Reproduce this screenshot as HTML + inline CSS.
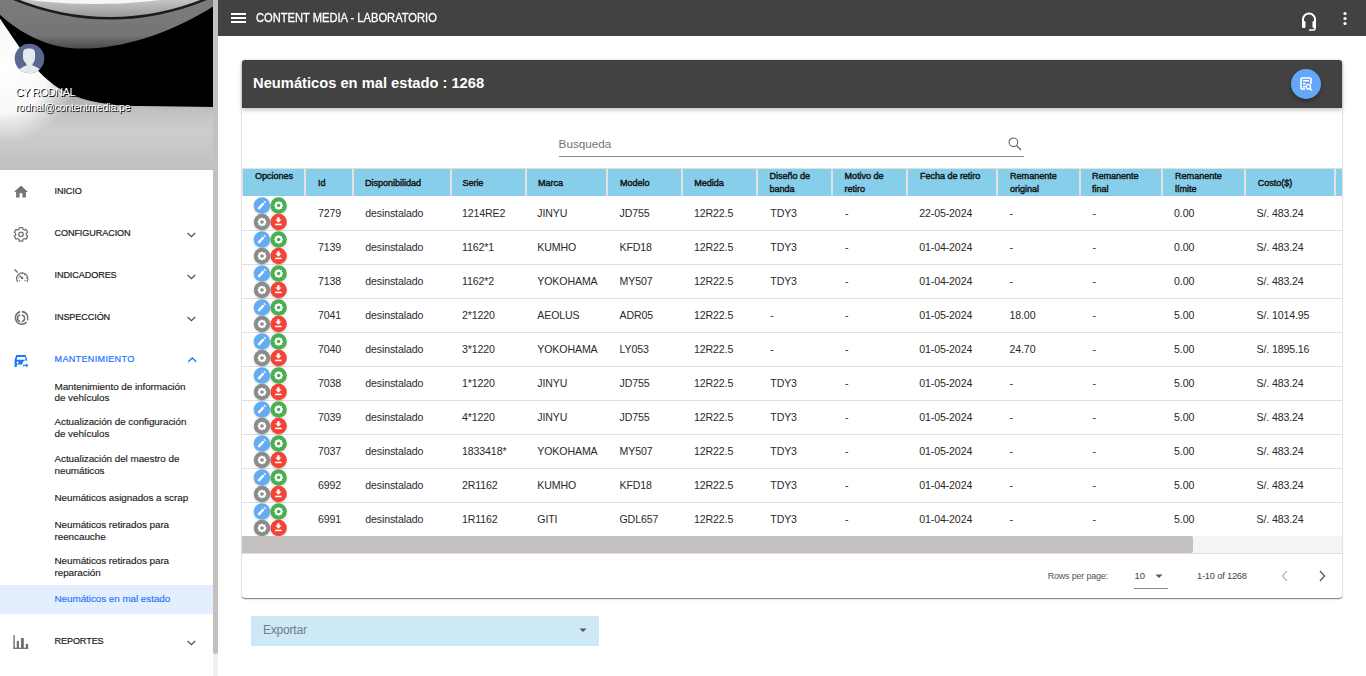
<!DOCTYPE html><html><head><meta charset="utf-8"><style>
*{margin:0;padding:0;box-sizing:border-box}
html,body{width:1366px;height:676px;overflow:hidden;background:#fff;font-family:"Liberation Sans", sans-serif}
.t{position:absolute;white-space:nowrap}
.a{position:absolute}
</style></head><body><div class="a" style="left:0;top:0;width:218px;height:676px"><svg class="a" style="left:0;top:0" width="213" height="170" viewBox="0 0 213 170">
<defs>
<linearGradient id="floor" gradientUnits="userSpaceOnUse" x1="0" y1="100" x2="0" y2="170"><stop offset="0" stop-color="#b4b4b4"/><stop offset="0.2" stop-color="#c4c4c4"/><stop offset="0.45" stop-color="#cdcdcd"/><stop offset="1" stop-color="#c0c0c0"/></linearGradient>
<radialGradient id="lw" gradientUnits="userSpaceOnUse" cx="5" cy="70" r="72"><stop offset="0" stop-color="#fff"/><stop offset="0.6" stop-color="#f8f8f8"/><stop offset="1" stop-color="#eee" stop-opacity="0"/></radialGradient>
<linearGradient id="rim" gradientUnits="userSpaceOnUse" x1="0" y1="0" x2="0" y2="17"><stop offset="0" stop-color="#c4c4c4"/><stop offset="1" stop-color="#9a9a9a"/></linearGradient>
<linearGradient id="sw" gradientUnits="userSpaceOnUse" x1="0" y1="15" x2="0" y2="49"><stop offset="0" stop-color="#7a7a7a"/><stop offset="0.6" stop-color="#747474"/><stop offset="1" stop-color="#4a4a4a"/></linearGradient>
<filter id="bl" x="-20%" y="-20%" width="140%" height="140%"><feGaussianBlur stdDeviation="0.6"/></filter>
</defs>
<rect width="213" height="170" fill="url(#floor)"/>
<rect x="0" y="0" width="213" height="170" fill="url(#lw)"/>
<g filter="url(#bl)">
<path d="M-5 -5 L220 -5 L220 107 L140 106 C105 106 80 100 62 90 C35 75 15 40 -5 11 Z" fill="#050505"/>
<path d="M-5 -5 L220 -5 L220 2 C170 35 120 49 80 48.6 C40 48 10 25 -5 10 Z" fill="url(#sw)"/>
<circle cx="110" cy="-232" r="251.5" fill="#1a1a1a"/>
<circle cx="110" cy="-232" r="249" fill="url(#rim)"/>
<circle cx="95" cy="-526" r="530" fill="#f6f6f6"/>
</g>
</svg><svg class="a" style="left:14px;top:43px" width="31" height="31" viewBox="0 0 31 31">
<defs><clipPath id="cc"><circle cx="15.5" cy="15.5" r="14.8"/></clipPath></defs>
<circle cx="15.5" cy="15.5" r="14.8" fill="#5a6890"/>
<g clip-path="url(#cc)" fill="#e4e9ec">
<path d="M9 10 C9 6.5 11 5.4 15 5.4 C19 5.4 21 6.5 21 10 L21 14.5 C21 17.5 20 19.5 18.5 21 L18.5 22.5 C21.5 23.5 24.5 25 27 27.5 L27 32 L4 32 L4 27.5 C6.5 25 9.5 23.5 12.5 22.5 L12.5 21 C11 19.5 9 17.5 9 14.5 Z"/>
</g></svg><div class="t" style="left:15.4px;top:86.92px;font-size:11.2px;line-height:11.2px;color:#fff;font-weight:400;letter-spacing:-0.6px;text-shadow:1px 1px 0 #000">CY RODNAL</div><div class="t" style="left:15.4px;top:101.93px;font-size:10.6px;line-height:10.6px;color:#fff;font-weight:400;letter-spacing:-0.16px;text-shadow:1px 1px 0 #000">rodnal@contentmedia.pe</div><div class="t" style="left:54.5px;top:187.30px;font-size:9.1px;line-height:9.1px;color:#1c1c1c;font-weight:400;letter-spacing:-0.1px;-webkit-text-stroke:0.2px #1c1c1c">INICIO</div><div class="t" style="left:54.5px;top:229.30px;font-size:9.1px;line-height:9.1px;color:#1c1c1c;font-weight:400;letter-spacing:-0.1px;-webkit-text-stroke:0.2px #1c1c1c">CONFIGURACION</div><svg class="a" style="left:185px;top:229.5px" width="13" height="9"><path d="M2.6 3 L6.4 6.7 L10.2 3" fill="none" stroke="#4a4a4a" stroke-width="1.1"/></svg><div class="t" style="left:54.5px;top:271.30px;font-size:9.1px;line-height:9.1px;color:#1c1c1c;font-weight:400;letter-spacing:-0.1px;-webkit-text-stroke:0.2px #1c1c1c">INDICADORES</div><svg class="a" style="left:185px;top:271.5px" width="13" height="9"><path d="M2.6 3 L6.4 6.7 L10.2 3" fill="none" stroke="#4a4a4a" stroke-width="1.1"/></svg><div class="t" style="left:54.5px;top:313.30px;font-size:9.1px;line-height:9.1px;color:#1c1c1c;font-weight:400;letter-spacing:-0.1px;-webkit-text-stroke:0.2px #1c1c1c">INSPECCIÓN</div><svg class="a" style="left:185px;top:313.5px" width="13" height="9"><path d="M2.6 3 L6.4 6.7 L10.2 3" fill="none" stroke="#4a4a4a" stroke-width="1.1"/></svg><div class="t" style="left:54.5px;top:355.30px;font-size:9.1px;line-height:9.1px;color:#1f74ff;font-weight:400;letter-spacing:0.3px;-webkit-text-stroke:0.2px #1f74ff">MANTENIMIENTO</div><svg class="a" style="left:185px;top:355.5px" width="13" height="9"><path d="M3.2 5.8 L7.3 2 L11.1 5.8" fill="none" stroke="#1f74ff" stroke-width="1.4"/></svg><div class="t" style="left:54.5px;top:637.30px;font-size:9.1px;line-height:9.1px;color:#1c1c1c;font-weight:400;letter-spacing:-0.1px;-webkit-text-stroke:0.2px #1c1c1c">REPORTES</div><svg class="a" style="left:185px;top:637.5px" width="13" height="9"><path d="M2.6 3 L6.4 6.7 L10.2 3" fill="none" stroke="#4a4a4a" stroke-width="1.1"/></svg><svg class="a" style="left:0;top:170px" width="40" height="490" viewBox="0 170 40 490"><path transform="translate(12.6,183.5) scale(0.7)" d="M10 20v-6h4v6h5v-8h3L12 3 2 12h3v8z" fill="#757575"/><path d="M19.02 229.28 L19.34 227.50 L22.66 227.50 L22.98 229.28 L24.36 230.07 L26.06 229.46 L27.72 232.34 L26.34 233.50 L26.34 235.10 L27.72 236.26 L26.06 239.14 L24.36 238.53 L22.98 239.32 L22.66 241.10 L19.34 241.10 L19.02 239.32 L17.64 238.53 L15.94 239.14 L14.28 236.26 L15.66 235.10 L15.66 233.50 L14.28 232.34 L15.94 229.46 L17.64 230.07 Z" fill="none" stroke="#6f6f6f" stroke-width="1.25" stroke-linejoin="round"/><circle cx="21" cy="234.3" r="2.3" fill="none" stroke="#6f6f6f" stroke-width="1.25"/><path d="M17.6 281.8 A5.6 5.6 0 1 1 26.8 281.8" fill="none" stroke="#6f6f6f" stroke-width="1.3"/><path d="M14.5 269.5 L17.6 272.6" stroke="#6f6f6f" stroke-width="1.4"/><path d="M19.3 275.6 L22.2 278" stroke="#6f6f6f" stroke-width="1.6"/><path d="M22.2 272.6 V274.2 M17.3 278 H18.8 M25.6 278 H27 M19 281 L19.9 280.2 M25.4 281 L24.6 280.2 M24.8 274.6 L24 275.4" stroke="#6f6f6f" stroke-width="1.1"/><circle cx="22.2" cy="278.1" r="1.2" fill="#6f6f6f"/><path d="M20.3 311.6 A6.4 6.4 0 1 0 26.6 322" fill="none" stroke="#6f6f6f" stroke-width="1.6"/><path d="M22 311.6 A6.4 6.4 0 0 1 27.4 320.5" fill="none" stroke="#6f6f6f" stroke-width="1.6"/><path d="M20.3 321.7 A3.4 3.4 0 0 1 20.3 315" fill="none" stroke="#6f6f6f" stroke-width="1.5"/><path d="M21.8 315 A3.4 3.4 0 0 1 21.8 321.7" fill="none" stroke="#6f6f6f" stroke-width="1.5"/><path d="M16.2 355 H25.6 L27.4 360.5 H24.5 C23.2 361 22.6 362.5 22.2 364.6 H16.8 V367 H14.6 V360 Z M17.4 357 L16.6 359.8 H25.8 L25 357 Z" fill="#1f74ff" fill-rule="evenodd"/><circle cx="17.6" cy="362.6" r="1.1" fill="#fff"/><path d="M23 365.4 H27" stroke="#1f74ff" stroke-width="1.3"/><path d="M26.2 363.3 L28.4 365.4 L26.2 367.5 Z" fill="#1f74ff"/><rect x="13.4" y="635.2" width="1.4" height="13.7" fill="#6f6f6f"/><rect x="16.8" y="640.9" width="2.2" height="8" fill="#6f6f6f"/><rect x="21" y="638" width="2.8" height="10.9" fill="#6f6f6f"/><rect x="25.8" y="644" width="2.3" height="4.9" fill="#6f6f6f"/><rect x="13.4" y="647.7" width="14.8" height="1.2" fill="#6f6f6f"/></svg><div class="a" style="left:0;top:585px;width:213px;height:29px;background:#e3effc"></div><div class="t" style="left:54.5px;top:381.52px;font-size:9.9px;line-height:9.9px;color:#1c1c1c;font-weight:400;letter-spacing:-0.05px;-webkit-text-stroke:0.15px #1c1c1c">Mantenimiento de información</div><div class="t" style="left:54.5px;top:393.32px;font-size:9.9px;line-height:9.9px;color:#1c1c1c;font-weight:400;letter-spacing:-0.05px;-webkit-text-stroke:0.15px #1c1c1c">de vehículos</div><div class="t" style="left:54.5px;top:417.42px;font-size:9.9px;line-height:9.9px;color:#1c1c1c;font-weight:400;letter-spacing:-0.05px;-webkit-text-stroke:0.15px #1c1c1c">Actualización de configuración</div><div class="t" style="left:54.5px;top:429.22px;font-size:9.9px;line-height:9.9px;color:#1c1c1c;font-weight:400;letter-spacing:-0.05px;-webkit-text-stroke:0.15px #1c1c1c">de vehículos</div><div class="t" style="left:54.5px;top:453.82px;font-size:9.9px;line-height:9.9px;color:#1c1c1c;font-weight:400;letter-spacing:-0.05px;-webkit-text-stroke:0.15px #1c1c1c">Actualización del maestro de</div><div class="t" style="left:54.5px;top:465.62px;font-size:9.9px;line-height:9.9px;color:#1c1c1c;font-weight:400;letter-spacing:-0.05px;-webkit-text-stroke:0.15px #1c1c1c">neumáticos</div><div class="t" style="left:54.5px;top:492.62px;font-size:9.9px;line-height:9.9px;color:#1c1c1c;font-weight:400;letter-spacing:-0.05px;-webkit-text-stroke:0.15px #1c1c1c">Neumáticos asignados a scrap</div><div class="t" style="left:54.5px;top:519.82px;font-size:9.9px;line-height:9.9px;color:#1c1c1c;font-weight:400;letter-spacing:-0.05px;-webkit-text-stroke:0.15px #1c1c1c">Neumáticos retirados para</div><div class="t" style="left:54.5px;top:531.62px;font-size:9.9px;line-height:9.9px;color:#1c1c1c;font-weight:400;letter-spacing:-0.05px;-webkit-text-stroke:0.15px #1c1c1c">reencauche</div><div class="t" style="left:54.5px;top:555.82px;font-size:9.9px;line-height:9.9px;color:#1c1c1c;font-weight:400;letter-spacing:-0.05px;-webkit-text-stroke:0.15px #1c1c1c">Neumáticos retirados para</div><div class="t" style="left:54.5px;top:567.62px;font-size:9.9px;line-height:9.9px;color:#1c1c1c;font-weight:400;letter-spacing:-0.05px;-webkit-text-stroke:0.15px #1c1c1c">reparación</div><div class="t" style="left:54.5px;top:594.42px;font-size:9.9px;line-height:9.9px;color:#1f74ff;font-weight:400;letter-spacing:-0.05px;-webkit-text-stroke:0.15px #1f74ff">Neumáticos en mal estado</div><div class="a" style="left:213px;top:0;width:5px;height:676px;background:#f1f1f1"></div><div class="a" style="left:213px;top:0;width:5px;height:654px;background:#c4c0c0;border-radius:0 0 3px 3px"></div></div>
<div class="a" style="left:218px;top:0;width:1148px;height:36px;background:#424242"></div><svg class="a" style="left:231px;top:12px" width="16" height="12"><rect x="0" y="1" width="15" height="2" fill="#fff"/><rect x="0" y="5" width="15" height="2" fill="#fff"/><rect x="0" y="9" width="15" height="2" fill="#fff"/></svg><div class="t" style="left:256.2px;top:11.73px;font-size:12.6px;line-height:12.6px;color:#fff;font-weight:400;letter-spacing:0px;-webkit-text-stroke:0.3px #fff;transform:scaleX(.885);transform-origin:0 0">CONTENT MEDIA - LABORATORIO</div><svg class="a" style="left:1300px;top:11px" width="18" height="20" viewBox="0 0 18 20">
<path d="M3 11 V8.5 A6 6 0 0 1 15 8.5 V11" fill="none" stroke="#fff" stroke-width="2"/>
<rect x="2" y="10" width="3.5" height="7" rx="1.2" fill="#fff"/><rect x="12.5" y="10" width="3.5" height="7" rx="1.2" fill="#fff"/>
<path d="M15 16 V17.5 A1.5 1.5 0 0 1 13.5 19 H9" fill="none" stroke="#fff" stroke-width="1.6"/>
</svg><svg class="a" style="left:1341px;top:11px" width="8" height="16"><circle cx="4" cy="2.5" r="1.6" fill="#fff"/><circle cx="4" cy="7.5" r="1.6" fill="#fff"/><circle cx="4" cy="12.5" r="1.6" fill="#fff"/></svg>
<div class="a" style="left:242px;top:60px;width:1100px;height:538px;background:#fff;border-radius:3px;box-shadow:0 1px 1px 0 rgba(0,0,0,.45),0 0 1px 0 rgba(0,0,0,.18),0 1px 3px 0 rgba(0,0,0,.12)"></div><div class="a" style="left:242px;top:60px;width:1100px;height:48px;background:#424242;border-radius:3px 3px 0 0;box-shadow:0 2px 4px rgba(0,0,0,.25)"></div><div class="t" style="left:253.1px;top:76.46px;font-size:14.7px;line-height:14.7px;color:#fff;font-weight:700;letter-spacing:0px;">Neumáticos en mal estado : 1268</div><div class="a" style="left:1291px;top:69px;width:30px;height:30px;border-radius:50%;background:#64a7f8;box-shadow:0 2px 4px rgba(0,0,0,.35)"></div><svg class="a" style="left:1298px;top:76px" width="16" height="16" viewBox="0 0 16 16">
<path d="M3 13 V3 A1 1 0 0 1 4 2 H12 A1 1 0 0 1 13 3 V8" fill="none" stroke="#fff" stroke-width="1.6"/>
<path d="M3 13 H7" stroke="#fff" stroke-width="1.6"/>
<rect x="5" y="4" width="6" height="1.5" fill="#fff"/><rect x="5" y="7" width="2.5" height="1.5" fill="#fff"/><rect x="5" y="10" width="2" height="1.5" fill="#fff"/>
<circle cx="10.3" cy="10.8" r="2.2" fill="none" stroke="#fff" stroke-width="1.5"/>
<path d="M11.8 12.3 L14 14.5" stroke="#fff" stroke-width="1.6"/>
</svg><div class="t" style="left:558.6px;top:137.50px;font-size:11.7px;line-height:11.7px;color:#757575;font-weight:400;letter-spacing:0px;">Busqueda</div><div class="a" style="left:559px;top:156px;width:465px;height:1px;background:#8a8a8a"></div><svg class="a" style="left:1006px;top:136px" width="18" height="17" viewBox="0 0 18 17">
<circle cx="7.4" cy="6.3" r="4.3" fill="none" stroke="#666" stroke-width="1.1"/>
<path d="M10.5 9.5 L15 14" stroke="#666" stroke-width="1.3"/></svg><div class="a" style="left:0;top:0;width:1342px;height:676px;overflow:hidden"><div class="a" style="left:242px;top:168px;width:1100px;height:28px;background:#e3e0e0"></div><div class="a" style="left:243px;top:169px;width:61px;height:27px;background:#87ceeb"></div><div class="a" style="left:306px;top:169px;width:46px;height:27px;background:#87ceeb"></div><div class="a" style="left:354px;top:169px;width:96px;height:27px;background:#87ceeb"></div><div class="a" style="left:452px;top:169px;width:73px;height:27px;background:#87ceeb"></div><div class="a" style="left:527px;top:169px;width:79px;height:27px;background:#87ceeb"></div><div class="a" style="left:608px;top:169px;width:73px;height:27px;background:#87ceeb"></div><div class="a" style="left:683px;top:169px;width:73px;height:27px;background:#87ceeb"></div><div class="a" style="left:758px;top:169px;width:73px;height:27px;background:#87ceeb"></div><div class="a" style="left:833px;top:169px;width:73px;height:27px;background:#87ceeb"></div><div class="a" style="left:908px;top:169px;width:88px;height:27px;background:#87ceeb"></div><div class="a" style="left:998px;top:169px;width:81px;height:27px;background:#87ceeb"></div><div class="a" style="left:1081px;top:169px;width:80px;height:27px;background:#87ceeb"></div><div class="a" style="left:1163px;top:169px;width:81px;height:27px;background:#87ceeb"></div><div class="a" style="left:1246px;top:169px;width:88px;height:27px;background:#87ceeb"></div><div class="a" style="left:1336px;top:169px;width:64px;height:27px;background:#87ceeb"></div><div class="t" style="left:255px;top:171.60px;font-size:9.1px;line-height:9.1px;color:#111;font-weight:400;letter-spacing:-0.05px;-webkit-text-stroke:0.4px #111">Opciones</div><div class="t" style="left:318px;top:178.50px;font-size:9.1px;line-height:9.1px;color:#111;font-weight:400;letter-spacing:-0.05px;-webkit-text-stroke:0.4px #111">Id</div><div class="t" style="left:365px;top:178.50px;font-size:9.1px;line-height:9.1px;color:#111;font-weight:400;letter-spacing:-0.05px;-webkit-text-stroke:0.4px #111">Disponibilidad</div><div class="t" style="left:462.4px;top:178.50px;font-size:9.1px;line-height:9.1px;color:#111;font-weight:400;letter-spacing:-0.05px;-webkit-text-stroke:0.4px #111">Serie</div><div class="t" style="left:537.9px;top:178.50px;font-size:9.1px;line-height:9.1px;color:#111;font-weight:400;letter-spacing:-0.05px;-webkit-text-stroke:0.4px #111">Marca</div><div class="t" style="left:619.9px;top:178.50px;font-size:9.1px;line-height:9.1px;color:#111;font-weight:400;letter-spacing:-0.05px;-webkit-text-stroke:0.4px #111">Modelo</div><div class="t" style="left:694.3px;top:178.50px;font-size:9.1px;line-height:9.1px;color:#111;font-weight:400;letter-spacing:-0.05px;-webkit-text-stroke:0.4px #111">Medida</div><div class="t" style="left:769.6px;top:171.60px;font-size:9.1px;line-height:9.1px;color:#111;font-weight:400;letter-spacing:-0.05px;-webkit-text-stroke:0.4px #111">Diseño de</div><div class="t" style="left:769.6px;top:185.40px;font-size:9.1px;line-height:9.1px;color:#111;font-weight:400;letter-spacing:-0.05px;-webkit-text-stroke:0.4px #111">banda</div><div class="t" style="left:844.6px;top:171.60px;font-size:9.1px;line-height:9.1px;color:#111;font-weight:400;letter-spacing:-0.05px;-webkit-text-stroke:0.4px #111">Motivo de</div><div class="t" style="left:844.6px;top:185.40px;font-size:9.1px;line-height:9.1px;color:#111;font-weight:400;letter-spacing:-0.05px;-webkit-text-stroke:0.4px #111">retiro</div><div class="t" style="left:919.9px;top:171.60px;font-size:9.1px;line-height:9.1px;color:#111;font-weight:400;letter-spacing:-0.05px;-webkit-text-stroke:0.4px #111">Fecha de retiro</div><div class="t" style="left:919.9px;top:185.40px;font-size:9.1px;line-height:9.1px;color:#111;font-weight:400;letter-spacing:-0.05px;-webkit-text-stroke:0.4px #111"></div><div class="t" style="left:1010.1px;top:171.60px;font-size:9.1px;line-height:9.1px;color:#111;font-weight:400;letter-spacing:-0.05px;-webkit-text-stroke:0.4px #111">Remanente</div><div class="t" style="left:1010.1px;top:185.40px;font-size:9.1px;line-height:9.1px;color:#111;font-weight:400;letter-spacing:-0.05px;-webkit-text-stroke:0.4px #111">original</div><div class="t" style="left:1092px;top:171.60px;font-size:9.1px;line-height:9.1px;color:#111;font-weight:400;letter-spacing:-0.05px;-webkit-text-stroke:0.4px #111">Remanente</div><div class="t" style="left:1092px;top:185.40px;font-size:9.1px;line-height:9.1px;color:#111;font-weight:400;letter-spacing:-0.05px;-webkit-text-stroke:0.4px #111">final</div><div class="t" style="left:1175.1px;top:171.60px;font-size:9.1px;line-height:9.1px;color:#111;font-weight:400;letter-spacing:-0.05px;-webkit-text-stroke:0.4px #111">Remanente</div><div class="t" style="left:1175.1px;top:185.40px;font-size:9.1px;line-height:9.1px;color:#111;font-weight:400;letter-spacing:-0.05px;-webkit-text-stroke:0.4px #111">límite</div><div class="t" style="left:1257.7px;top:178.50px;font-size:9.1px;line-height:9.1px;color:#111;font-weight:400;letter-spacing:-0.05px;-webkit-text-stroke:0.4px #111">Costo($)</div><div class="a" style="left:242px;top:230px;width:1100px;height:1px;background:#e0e0e0"></div><svg class="a" style="left:252px;top:196px" width="38" height="35" viewBox="0 0 38 35"><defs><filter id="sh0" x="-50%" y="-50%" width="200%" height="200%"><feGaussianBlur stdDeviation="1"/></filter></defs><circle cx="10" cy="10.5" r="8.2" fill="rgba(0,0,0,.18)" filter="url(#sh0)"/><circle cx="26.6" cy="10.5" r="8.2" fill="rgba(0,0,0,.18)" filter="url(#sh0)"/><circle cx="10" cy="27" r="8.2" fill="rgba(0,0,0,.18)" filter="url(#sh0)"/><circle cx="26.6" cy="27" r="8.2" fill="rgba(0,0,0,.18)" filter="url(#sh0)"/><circle cx="10" cy="9.5" r="8.2" fill="#63acf4"/><circle cx="26.6" cy="9.5" r="8.2" fill="#4bae50"/><circle cx="10" cy="26" r="8.2" fill="#8b8d8a"/><circle cx="26.6" cy="26" r="8.2" fill="#f44336"/><path d="M6.4 12.9 L11.6 7.3" stroke="#fff" stroke-width="2.3"/><path d="M12.3 6.5 L13.2 5.6" stroke="#fff" stroke-width="2.3"/><polygon points="26.60,4.90 28.02,6.08 29.85,6.25 30.02,8.08 31.20,9.50 30.02,10.92 29.85,12.75 28.02,12.92 26.60,14.10 25.18,12.92 23.35,12.75 23.18,10.92 22.00,9.50 23.18,8.08 23.35,6.25 25.18,6.08" fill="#fff"/><circle cx="26.6" cy="9.5" r="1.8" fill="#4bae50"/><polygon points="10.00,21.40 11.42,22.58 13.25,22.75 13.42,24.58 14.60,26.00 13.42,27.42 13.25,29.25 11.42,29.42 10.00,30.60 8.58,29.42 6.75,29.25 6.58,27.42 5.40,26.00 6.58,24.58 6.75,22.75 8.58,22.58" fill="#fff"/><circle cx="10" cy="26" r="1.8" fill="#8b8d8a"/><path d="M25.2 21.2 H27.6 V23.6 H29.5 L26.4 26.7 L23.3 23.6 H25.2 Z" fill="#fff"/><rect x="23.1" y="27.7" width="6.5" height="1.5" fill="#fff"/></svg><div class="t" style="left:318px;top:208.03px;font-size:10.6px;line-height:10.6px;color:#2a2a2a;font-weight:400;letter-spacing:-0.12px;">7279</div><div class="t" style="left:365.2px;top:208.03px;font-size:10.6px;line-height:10.6px;color:#2a2a2a;font-weight:400;letter-spacing:-0.12px;">desinstalado</div><div class="t" style="left:462px;top:208.03px;font-size:10.6px;line-height:10.6px;color:#2a2a2a;font-weight:400;letter-spacing:-0.12px;">1214RE2</div><div class="t" style="left:537.3px;top:208.03px;font-size:10.6px;line-height:10.6px;color:#2a2a2a;font-weight:400;letter-spacing:-0.12px;">JINYU</div><div class="t" style="left:619.5px;top:208.03px;font-size:10.6px;line-height:10.6px;color:#2a2a2a;font-weight:400;letter-spacing:-0.12px;">JD755</div><div class="t" style="left:694px;top:208.03px;font-size:10.6px;line-height:10.6px;color:#2a2a2a;font-weight:400;letter-spacing:-0.12px;">12R22.5</div><div class="t" style="left:770.3px;top:208.03px;font-size:10.6px;line-height:10.6px;color:#2a2a2a;font-weight:400;letter-spacing:-0.12px;">TDY3</div><div class="t" style="left:845px;top:208.03px;font-size:10.6px;line-height:10.6px;color:#2a2a2a;font-weight:400;letter-spacing:-0.12px;">-</div><div class="t" style="left:919.2px;top:208.03px;font-size:10.6px;line-height:10.6px;color:#2a2a2a;font-weight:400;letter-spacing:-0.12px;">22-05-2024</div><div class="t" style="left:1009.5px;top:208.03px;font-size:10.6px;line-height:10.6px;color:#2a2a2a;font-weight:400;letter-spacing:-0.12px;">-</div><div class="t" style="left:1092.4px;top:208.03px;font-size:10.6px;line-height:10.6px;color:#2a2a2a;font-weight:400;letter-spacing:-0.12px;">-</div><div class="t" style="left:1174.1px;top:208.03px;font-size:10.6px;line-height:10.6px;color:#2a2a2a;font-weight:400;letter-spacing:-0.12px;">0.00</div><div class="t" style="left:1256.5px;top:208.03px;font-size:10.6px;line-height:10.6px;color:#2a2a2a;font-weight:400;letter-spacing:-0.12px;">S/. 483.24</div><div class="a" style="left:242px;top:264px;width:1100px;height:1px;background:#e0e0e0"></div><svg class="a" style="left:252px;top:230px" width="38" height="35" viewBox="0 0 38 35"><defs><filter id="sh1" x="-50%" y="-50%" width="200%" height="200%"><feGaussianBlur stdDeviation="1"/></filter></defs><circle cx="10" cy="10.5" r="8.2" fill="rgba(0,0,0,.18)" filter="url(#sh1)"/><circle cx="26.6" cy="10.5" r="8.2" fill="rgba(0,0,0,.18)" filter="url(#sh1)"/><circle cx="10" cy="27" r="8.2" fill="rgba(0,0,0,.18)" filter="url(#sh1)"/><circle cx="26.6" cy="27" r="8.2" fill="rgba(0,0,0,.18)" filter="url(#sh1)"/><circle cx="10" cy="9.5" r="8.2" fill="#63acf4"/><circle cx="26.6" cy="9.5" r="8.2" fill="#4bae50"/><circle cx="10" cy="26" r="8.2" fill="#8b8d8a"/><circle cx="26.6" cy="26" r="8.2" fill="#f44336"/><path d="M6.4 12.9 L11.6 7.3" stroke="#fff" stroke-width="2.3"/><path d="M12.3 6.5 L13.2 5.6" stroke="#fff" stroke-width="2.3"/><polygon points="26.60,4.90 28.02,6.08 29.85,6.25 30.02,8.08 31.20,9.50 30.02,10.92 29.85,12.75 28.02,12.92 26.60,14.10 25.18,12.92 23.35,12.75 23.18,10.92 22.00,9.50 23.18,8.08 23.35,6.25 25.18,6.08" fill="#fff"/><circle cx="26.6" cy="9.5" r="1.8" fill="#4bae50"/><polygon points="10.00,21.40 11.42,22.58 13.25,22.75 13.42,24.58 14.60,26.00 13.42,27.42 13.25,29.25 11.42,29.42 10.00,30.60 8.58,29.42 6.75,29.25 6.58,27.42 5.40,26.00 6.58,24.58 6.75,22.75 8.58,22.58" fill="#fff"/><circle cx="10" cy="26" r="1.8" fill="#8b8d8a"/><path d="M25.2 21.2 H27.6 V23.6 H29.5 L26.4 26.7 L23.3 23.6 H25.2 Z" fill="#fff"/><rect x="23.1" y="27.7" width="6.5" height="1.5" fill="#fff"/></svg><div class="t" style="left:318px;top:242.03px;font-size:10.6px;line-height:10.6px;color:#2a2a2a;font-weight:400;letter-spacing:-0.12px;">7139</div><div class="t" style="left:365.2px;top:242.03px;font-size:10.6px;line-height:10.6px;color:#2a2a2a;font-weight:400;letter-spacing:-0.12px;">desinstalado</div><div class="t" style="left:462px;top:242.03px;font-size:10.6px;line-height:10.6px;color:#2a2a2a;font-weight:400;letter-spacing:-0.12px;">1162*1</div><div class="t" style="left:537.3px;top:242.03px;font-size:10.6px;line-height:10.6px;color:#2a2a2a;font-weight:400;letter-spacing:-0.12px;">KUMHO</div><div class="t" style="left:619.5px;top:242.03px;font-size:10.6px;line-height:10.6px;color:#2a2a2a;font-weight:400;letter-spacing:-0.12px;">KFD18</div><div class="t" style="left:694px;top:242.03px;font-size:10.6px;line-height:10.6px;color:#2a2a2a;font-weight:400;letter-spacing:-0.12px;">12R22.5</div><div class="t" style="left:770.3px;top:242.03px;font-size:10.6px;line-height:10.6px;color:#2a2a2a;font-weight:400;letter-spacing:-0.12px;">TDY3</div><div class="t" style="left:845px;top:242.03px;font-size:10.6px;line-height:10.6px;color:#2a2a2a;font-weight:400;letter-spacing:-0.12px;">-</div><div class="t" style="left:919.2px;top:242.03px;font-size:10.6px;line-height:10.6px;color:#2a2a2a;font-weight:400;letter-spacing:-0.12px;">01-04-2024</div><div class="t" style="left:1009.5px;top:242.03px;font-size:10.6px;line-height:10.6px;color:#2a2a2a;font-weight:400;letter-spacing:-0.12px;">-</div><div class="t" style="left:1092.4px;top:242.03px;font-size:10.6px;line-height:10.6px;color:#2a2a2a;font-weight:400;letter-spacing:-0.12px;">-</div><div class="t" style="left:1174.1px;top:242.03px;font-size:10.6px;line-height:10.6px;color:#2a2a2a;font-weight:400;letter-spacing:-0.12px;">0.00</div><div class="t" style="left:1256.5px;top:242.03px;font-size:10.6px;line-height:10.6px;color:#2a2a2a;font-weight:400;letter-spacing:-0.12px;">S/. 483.24</div><div class="a" style="left:242px;top:298px;width:1100px;height:1px;background:#e0e0e0"></div><svg class="a" style="left:252px;top:264px" width="38" height="35" viewBox="0 0 38 35"><defs><filter id="sh2" x="-50%" y="-50%" width="200%" height="200%"><feGaussianBlur stdDeviation="1"/></filter></defs><circle cx="10" cy="10.5" r="8.2" fill="rgba(0,0,0,.18)" filter="url(#sh2)"/><circle cx="26.6" cy="10.5" r="8.2" fill="rgba(0,0,0,.18)" filter="url(#sh2)"/><circle cx="10" cy="27" r="8.2" fill="rgba(0,0,0,.18)" filter="url(#sh2)"/><circle cx="26.6" cy="27" r="8.2" fill="rgba(0,0,0,.18)" filter="url(#sh2)"/><circle cx="10" cy="9.5" r="8.2" fill="#63acf4"/><circle cx="26.6" cy="9.5" r="8.2" fill="#4bae50"/><circle cx="10" cy="26" r="8.2" fill="#8b8d8a"/><circle cx="26.6" cy="26" r="8.2" fill="#f44336"/><path d="M6.4 12.9 L11.6 7.3" stroke="#fff" stroke-width="2.3"/><path d="M12.3 6.5 L13.2 5.6" stroke="#fff" stroke-width="2.3"/><polygon points="26.60,4.90 28.02,6.08 29.85,6.25 30.02,8.08 31.20,9.50 30.02,10.92 29.85,12.75 28.02,12.92 26.60,14.10 25.18,12.92 23.35,12.75 23.18,10.92 22.00,9.50 23.18,8.08 23.35,6.25 25.18,6.08" fill="#fff"/><circle cx="26.6" cy="9.5" r="1.8" fill="#4bae50"/><polygon points="10.00,21.40 11.42,22.58 13.25,22.75 13.42,24.58 14.60,26.00 13.42,27.42 13.25,29.25 11.42,29.42 10.00,30.60 8.58,29.42 6.75,29.25 6.58,27.42 5.40,26.00 6.58,24.58 6.75,22.75 8.58,22.58" fill="#fff"/><circle cx="10" cy="26" r="1.8" fill="#8b8d8a"/><path d="M25.2 21.2 H27.6 V23.6 H29.5 L26.4 26.7 L23.3 23.6 H25.2 Z" fill="#fff"/><rect x="23.1" y="27.7" width="6.5" height="1.5" fill="#fff"/></svg><div class="t" style="left:318px;top:276.03px;font-size:10.6px;line-height:10.6px;color:#2a2a2a;font-weight:400;letter-spacing:-0.12px;">7138</div><div class="t" style="left:365.2px;top:276.03px;font-size:10.6px;line-height:10.6px;color:#2a2a2a;font-weight:400;letter-spacing:-0.12px;">desinstalado</div><div class="t" style="left:462px;top:276.03px;font-size:10.6px;line-height:10.6px;color:#2a2a2a;font-weight:400;letter-spacing:-0.12px;">1162*2</div><div class="t" style="left:537.3px;top:276.03px;font-size:10.6px;line-height:10.6px;color:#2a2a2a;font-weight:400;letter-spacing:-0.12px;">YOKOHAMA</div><div class="t" style="left:619.5px;top:276.03px;font-size:10.6px;line-height:10.6px;color:#2a2a2a;font-weight:400;letter-spacing:-0.12px;">MY507</div><div class="t" style="left:694px;top:276.03px;font-size:10.6px;line-height:10.6px;color:#2a2a2a;font-weight:400;letter-spacing:-0.12px;">12R22.5</div><div class="t" style="left:770.3px;top:276.03px;font-size:10.6px;line-height:10.6px;color:#2a2a2a;font-weight:400;letter-spacing:-0.12px;">TDY3</div><div class="t" style="left:845px;top:276.03px;font-size:10.6px;line-height:10.6px;color:#2a2a2a;font-weight:400;letter-spacing:-0.12px;">-</div><div class="t" style="left:919.2px;top:276.03px;font-size:10.6px;line-height:10.6px;color:#2a2a2a;font-weight:400;letter-spacing:-0.12px;">01-04-2024</div><div class="t" style="left:1009.5px;top:276.03px;font-size:10.6px;line-height:10.6px;color:#2a2a2a;font-weight:400;letter-spacing:-0.12px;">-</div><div class="t" style="left:1092.4px;top:276.03px;font-size:10.6px;line-height:10.6px;color:#2a2a2a;font-weight:400;letter-spacing:-0.12px;">-</div><div class="t" style="left:1174.1px;top:276.03px;font-size:10.6px;line-height:10.6px;color:#2a2a2a;font-weight:400;letter-spacing:-0.12px;">0.00</div><div class="t" style="left:1256.5px;top:276.03px;font-size:10.6px;line-height:10.6px;color:#2a2a2a;font-weight:400;letter-spacing:-0.12px;">S/. 483.24</div><div class="a" style="left:242px;top:332px;width:1100px;height:1px;background:#e0e0e0"></div><svg class="a" style="left:252px;top:298px" width="38" height="35" viewBox="0 0 38 35"><defs><filter id="sh3" x="-50%" y="-50%" width="200%" height="200%"><feGaussianBlur stdDeviation="1"/></filter></defs><circle cx="10" cy="10.5" r="8.2" fill="rgba(0,0,0,.18)" filter="url(#sh3)"/><circle cx="26.6" cy="10.5" r="8.2" fill="rgba(0,0,0,.18)" filter="url(#sh3)"/><circle cx="10" cy="27" r="8.2" fill="rgba(0,0,0,.18)" filter="url(#sh3)"/><circle cx="26.6" cy="27" r="8.2" fill="rgba(0,0,0,.18)" filter="url(#sh3)"/><circle cx="10" cy="9.5" r="8.2" fill="#63acf4"/><circle cx="26.6" cy="9.5" r="8.2" fill="#4bae50"/><circle cx="10" cy="26" r="8.2" fill="#8b8d8a"/><circle cx="26.6" cy="26" r="8.2" fill="#f44336"/><path d="M6.4 12.9 L11.6 7.3" stroke="#fff" stroke-width="2.3"/><path d="M12.3 6.5 L13.2 5.6" stroke="#fff" stroke-width="2.3"/><polygon points="26.60,4.90 28.02,6.08 29.85,6.25 30.02,8.08 31.20,9.50 30.02,10.92 29.85,12.75 28.02,12.92 26.60,14.10 25.18,12.92 23.35,12.75 23.18,10.92 22.00,9.50 23.18,8.08 23.35,6.25 25.18,6.08" fill="#fff"/><circle cx="26.6" cy="9.5" r="1.8" fill="#4bae50"/><polygon points="10.00,21.40 11.42,22.58 13.25,22.75 13.42,24.58 14.60,26.00 13.42,27.42 13.25,29.25 11.42,29.42 10.00,30.60 8.58,29.42 6.75,29.25 6.58,27.42 5.40,26.00 6.58,24.58 6.75,22.75 8.58,22.58" fill="#fff"/><circle cx="10" cy="26" r="1.8" fill="#8b8d8a"/><path d="M25.2 21.2 H27.6 V23.6 H29.5 L26.4 26.7 L23.3 23.6 H25.2 Z" fill="#fff"/><rect x="23.1" y="27.7" width="6.5" height="1.5" fill="#fff"/></svg><div class="t" style="left:318px;top:310.03px;font-size:10.6px;line-height:10.6px;color:#2a2a2a;font-weight:400;letter-spacing:-0.12px;">7041</div><div class="t" style="left:365.2px;top:310.03px;font-size:10.6px;line-height:10.6px;color:#2a2a2a;font-weight:400;letter-spacing:-0.12px;">desinstalado</div><div class="t" style="left:462px;top:310.03px;font-size:10.6px;line-height:10.6px;color:#2a2a2a;font-weight:400;letter-spacing:-0.12px;">2*1220</div><div class="t" style="left:537.3px;top:310.03px;font-size:10.6px;line-height:10.6px;color:#2a2a2a;font-weight:400;letter-spacing:-0.12px;">AEOLUS</div><div class="t" style="left:619.5px;top:310.03px;font-size:10.6px;line-height:10.6px;color:#2a2a2a;font-weight:400;letter-spacing:-0.12px;">ADR05</div><div class="t" style="left:694px;top:310.03px;font-size:10.6px;line-height:10.6px;color:#2a2a2a;font-weight:400;letter-spacing:-0.12px;">12R22.5</div><div class="t" style="left:770.3px;top:310.03px;font-size:10.6px;line-height:10.6px;color:#2a2a2a;font-weight:400;letter-spacing:-0.12px;">-</div><div class="t" style="left:845px;top:310.03px;font-size:10.6px;line-height:10.6px;color:#2a2a2a;font-weight:400;letter-spacing:-0.12px;">-</div><div class="t" style="left:919.2px;top:310.03px;font-size:10.6px;line-height:10.6px;color:#2a2a2a;font-weight:400;letter-spacing:-0.12px;">01-05-2024</div><div class="t" style="left:1009.5px;top:310.03px;font-size:10.6px;line-height:10.6px;color:#2a2a2a;font-weight:400;letter-spacing:-0.12px;">18.00</div><div class="t" style="left:1092.4px;top:310.03px;font-size:10.6px;line-height:10.6px;color:#2a2a2a;font-weight:400;letter-spacing:-0.12px;">-</div><div class="t" style="left:1174.1px;top:310.03px;font-size:10.6px;line-height:10.6px;color:#2a2a2a;font-weight:400;letter-spacing:-0.12px;">5.00</div><div class="t" style="left:1256.5px;top:310.03px;font-size:10.6px;line-height:10.6px;color:#2a2a2a;font-weight:400;letter-spacing:-0.12px;">S/. 1014.95</div><div class="a" style="left:242px;top:366px;width:1100px;height:1px;background:#e0e0e0"></div><svg class="a" style="left:252px;top:332px" width="38" height="35" viewBox="0 0 38 35"><defs><filter id="sh4" x="-50%" y="-50%" width="200%" height="200%"><feGaussianBlur stdDeviation="1"/></filter></defs><circle cx="10" cy="10.5" r="8.2" fill="rgba(0,0,0,.18)" filter="url(#sh4)"/><circle cx="26.6" cy="10.5" r="8.2" fill="rgba(0,0,0,.18)" filter="url(#sh4)"/><circle cx="10" cy="27" r="8.2" fill="rgba(0,0,0,.18)" filter="url(#sh4)"/><circle cx="26.6" cy="27" r="8.2" fill="rgba(0,0,0,.18)" filter="url(#sh4)"/><circle cx="10" cy="9.5" r="8.2" fill="#63acf4"/><circle cx="26.6" cy="9.5" r="8.2" fill="#4bae50"/><circle cx="10" cy="26" r="8.2" fill="#8b8d8a"/><circle cx="26.6" cy="26" r="8.2" fill="#f44336"/><path d="M6.4 12.9 L11.6 7.3" stroke="#fff" stroke-width="2.3"/><path d="M12.3 6.5 L13.2 5.6" stroke="#fff" stroke-width="2.3"/><polygon points="26.60,4.90 28.02,6.08 29.85,6.25 30.02,8.08 31.20,9.50 30.02,10.92 29.85,12.75 28.02,12.92 26.60,14.10 25.18,12.92 23.35,12.75 23.18,10.92 22.00,9.50 23.18,8.08 23.35,6.25 25.18,6.08" fill="#fff"/><circle cx="26.6" cy="9.5" r="1.8" fill="#4bae50"/><polygon points="10.00,21.40 11.42,22.58 13.25,22.75 13.42,24.58 14.60,26.00 13.42,27.42 13.25,29.25 11.42,29.42 10.00,30.60 8.58,29.42 6.75,29.25 6.58,27.42 5.40,26.00 6.58,24.58 6.75,22.75 8.58,22.58" fill="#fff"/><circle cx="10" cy="26" r="1.8" fill="#8b8d8a"/><path d="M25.2 21.2 H27.6 V23.6 H29.5 L26.4 26.7 L23.3 23.6 H25.2 Z" fill="#fff"/><rect x="23.1" y="27.7" width="6.5" height="1.5" fill="#fff"/></svg><div class="t" style="left:318px;top:344.03px;font-size:10.6px;line-height:10.6px;color:#2a2a2a;font-weight:400;letter-spacing:-0.12px;">7040</div><div class="t" style="left:365.2px;top:344.03px;font-size:10.6px;line-height:10.6px;color:#2a2a2a;font-weight:400;letter-spacing:-0.12px;">desinstalado</div><div class="t" style="left:462px;top:344.03px;font-size:10.6px;line-height:10.6px;color:#2a2a2a;font-weight:400;letter-spacing:-0.12px;">3*1220</div><div class="t" style="left:537.3px;top:344.03px;font-size:10.6px;line-height:10.6px;color:#2a2a2a;font-weight:400;letter-spacing:-0.12px;">YOKOHAMA</div><div class="t" style="left:619.5px;top:344.03px;font-size:10.6px;line-height:10.6px;color:#2a2a2a;font-weight:400;letter-spacing:-0.12px;">LY053</div><div class="t" style="left:694px;top:344.03px;font-size:10.6px;line-height:10.6px;color:#2a2a2a;font-weight:400;letter-spacing:-0.12px;">12R22.5</div><div class="t" style="left:770.3px;top:344.03px;font-size:10.6px;line-height:10.6px;color:#2a2a2a;font-weight:400;letter-spacing:-0.12px;">-</div><div class="t" style="left:845px;top:344.03px;font-size:10.6px;line-height:10.6px;color:#2a2a2a;font-weight:400;letter-spacing:-0.12px;">-</div><div class="t" style="left:919.2px;top:344.03px;font-size:10.6px;line-height:10.6px;color:#2a2a2a;font-weight:400;letter-spacing:-0.12px;">01-05-2024</div><div class="t" style="left:1009.5px;top:344.03px;font-size:10.6px;line-height:10.6px;color:#2a2a2a;font-weight:400;letter-spacing:-0.12px;">24.70</div><div class="t" style="left:1092.4px;top:344.03px;font-size:10.6px;line-height:10.6px;color:#2a2a2a;font-weight:400;letter-spacing:-0.12px;">-</div><div class="t" style="left:1174.1px;top:344.03px;font-size:10.6px;line-height:10.6px;color:#2a2a2a;font-weight:400;letter-spacing:-0.12px;">5.00</div><div class="t" style="left:1256.5px;top:344.03px;font-size:10.6px;line-height:10.6px;color:#2a2a2a;font-weight:400;letter-spacing:-0.12px;">S/. 1895.16</div><div class="a" style="left:242px;top:400px;width:1100px;height:1px;background:#e0e0e0"></div><svg class="a" style="left:252px;top:366px" width="38" height="35" viewBox="0 0 38 35"><defs><filter id="sh5" x="-50%" y="-50%" width="200%" height="200%"><feGaussianBlur stdDeviation="1"/></filter></defs><circle cx="10" cy="10.5" r="8.2" fill="rgba(0,0,0,.18)" filter="url(#sh5)"/><circle cx="26.6" cy="10.5" r="8.2" fill="rgba(0,0,0,.18)" filter="url(#sh5)"/><circle cx="10" cy="27" r="8.2" fill="rgba(0,0,0,.18)" filter="url(#sh5)"/><circle cx="26.6" cy="27" r="8.2" fill="rgba(0,0,0,.18)" filter="url(#sh5)"/><circle cx="10" cy="9.5" r="8.2" fill="#63acf4"/><circle cx="26.6" cy="9.5" r="8.2" fill="#4bae50"/><circle cx="10" cy="26" r="8.2" fill="#8b8d8a"/><circle cx="26.6" cy="26" r="8.2" fill="#f44336"/><path d="M6.4 12.9 L11.6 7.3" stroke="#fff" stroke-width="2.3"/><path d="M12.3 6.5 L13.2 5.6" stroke="#fff" stroke-width="2.3"/><polygon points="26.60,4.90 28.02,6.08 29.85,6.25 30.02,8.08 31.20,9.50 30.02,10.92 29.85,12.75 28.02,12.92 26.60,14.10 25.18,12.92 23.35,12.75 23.18,10.92 22.00,9.50 23.18,8.08 23.35,6.25 25.18,6.08" fill="#fff"/><circle cx="26.6" cy="9.5" r="1.8" fill="#4bae50"/><polygon points="10.00,21.40 11.42,22.58 13.25,22.75 13.42,24.58 14.60,26.00 13.42,27.42 13.25,29.25 11.42,29.42 10.00,30.60 8.58,29.42 6.75,29.25 6.58,27.42 5.40,26.00 6.58,24.58 6.75,22.75 8.58,22.58" fill="#fff"/><circle cx="10" cy="26" r="1.8" fill="#8b8d8a"/><path d="M25.2 21.2 H27.6 V23.6 H29.5 L26.4 26.7 L23.3 23.6 H25.2 Z" fill="#fff"/><rect x="23.1" y="27.7" width="6.5" height="1.5" fill="#fff"/></svg><div class="t" style="left:318px;top:378.03px;font-size:10.6px;line-height:10.6px;color:#2a2a2a;font-weight:400;letter-spacing:-0.12px;">7038</div><div class="t" style="left:365.2px;top:378.03px;font-size:10.6px;line-height:10.6px;color:#2a2a2a;font-weight:400;letter-spacing:-0.12px;">desinstalado</div><div class="t" style="left:462px;top:378.03px;font-size:10.6px;line-height:10.6px;color:#2a2a2a;font-weight:400;letter-spacing:-0.12px;">1*1220</div><div class="t" style="left:537.3px;top:378.03px;font-size:10.6px;line-height:10.6px;color:#2a2a2a;font-weight:400;letter-spacing:-0.12px;">JINYU</div><div class="t" style="left:619.5px;top:378.03px;font-size:10.6px;line-height:10.6px;color:#2a2a2a;font-weight:400;letter-spacing:-0.12px;">JD755</div><div class="t" style="left:694px;top:378.03px;font-size:10.6px;line-height:10.6px;color:#2a2a2a;font-weight:400;letter-spacing:-0.12px;">12R22.5</div><div class="t" style="left:770.3px;top:378.03px;font-size:10.6px;line-height:10.6px;color:#2a2a2a;font-weight:400;letter-spacing:-0.12px;">TDY3</div><div class="t" style="left:845px;top:378.03px;font-size:10.6px;line-height:10.6px;color:#2a2a2a;font-weight:400;letter-spacing:-0.12px;">-</div><div class="t" style="left:919.2px;top:378.03px;font-size:10.6px;line-height:10.6px;color:#2a2a2a;font-weight:400;letter-spacing:-0.12px;">01-05-2024</div><div class="t" style="left:1009.5px;top:378.03px;font-size:10.6px;line-height:10.6px;color:#2a2a2a;font-weight:400;letter-spacing:-0.12px;">-</div><div class="t" style="left:1092.4px;top:378.03px;font-size:10.6px;line-height:10.6px;color:#2a2a2a;font-weight:400;letter-spacing:-0.12px;">-</div><div class="t" style="left:1174.1px;top:378.03px;font-size:10.6px;line-height:10.6px;color:#2a2a2a;font-weight:400;letter-spacing:-0.12px;">5.00</div><div class="t" style="left:1256.5px;top:378.03px;font-size:10.6px;line-height:10.6px;color:#2a2a2a;font-weight:400;letter-spacing:-0.12px;">S/. 483.24</div><div class="a" style="left:242px;top:434px;width:1100px;height:1px;background:#e0e0e0"></div><svg class="a" style="left:252px;top:400px" width="38" height="35" viewBox="0 0 38 35"><defs><filter id="sh6" x="-50%" y="-50%" width="200%" height="200%"><feGaussianBlur stdDeviation="1"/></filter></defs><circle cx="10" cy="10.5" r="8.2" fill="rgba(0,0,0,.18)" filter="url(#sh6)"/><circle cx="26.6" cy="10.5" r="8.2" fill="rgba(0,0,0,.18)" filter="url(#sh6)"/><circle cx="10" cy="27" r="8.2" fill="rgba(0,0,0,.18)" filter="url(#sh6)"/><circle cx="26.6" cy="27" r="8.2" fill="rgba(0,0,0,.18)" filter="url(#sh6)"/><circle cx="10" cy="9.5" r="8.2" fill="#63acf4"/><circle cx="26.6" cy="9.5" r="8.2" fill="#4bae50"/><circle cx="10" cy="26" r="8.2" fill="#8b8d8a"/><circle cx="26.6" cy="26" r="8.2" fill="#f44336"/><path d="M6.4 12.9 L11.6 7.3" stroke="#fff" stroke-width="2.3"/><path d="M12.3 6.5 L13.2 5.6" stroke="#fff" stroke-width="2.3"/><polygon points="26.60,4.90 28.02,6.08 29.85,6.25 30.02,8.08 31.20,9.50 30.02,10.92 29.85,12.75 28.02,12.92 26.60,14.10 25.18,12.92 23.35,12.75 23.18,10.92 22.00,9.50 23.18,8.08 23.35,6.25 25.18,6.08" fill="#fff"/><circle cx="26.6" cy="9.5" r="1.8" fill="#4bae50"/><polygon points="10.00,21.40 11.42,22.58 13.25,22.75 13.42,24.58 14.60,26.00 13.42,27.42 13.25,29.25 11.42,29.42 10.00,30.60 8.58,29.42 6.75,29.25 6.58,27.42 5.40,26.00 6.58,24.58 6.75,22.75 8.58,22.58" fill="#fff"/><circle cx="10" cy="26" r="1.8" fill="#8b8d8a"/><path d="M25.2 21.2 H27.6 V23.6 H29.5 L26.4 26.7 L23.3 23.6 H25.2 Z" fill="#fff"/><rect x="23.1" y="27.7" width="6.5" height="1.5" fill="#fff"/></svg><div class="t" style="left:318px;top:412.03px;font-size:10.6px;line-height:10.6px;color:#2a2a2a;font-weight:400;letter-spacing:-0.12px;">7039</div><div class="t" style="left:365.2px;top:412.03px;font-size:10.6px;line-height:10.6px;color:#2a2a2a;font-weight:400;letter-spacing:-0.12px;">desinstalado</div><div class="t" style="left:462px;top:412.03px;font-size:10.6px;line-height:10.6px;color:#2a2a2a;font-weight:400;letter-spacing:-0.12px;">4*1220</div><div class="t" style="left:537.3px;top:412.03px;font-size:10.6px;line-height:10.6px;color:#2a2a2a;font-weight:400;letter-spacing:-0.12px;">JINYU</div><div class="t" style="left:619.5px;top:412.03px;font-size:10.6px;line-height:10.6px;color:#2a2a2a;font-weight:400;letter-spacing:-0.12px;">JD755</div><div class="t" style="left:694px;top:412.03px;font-size:10.6px;line-height:10.6px;color:#2a2a2a;font-weight:400;letter-spacing:-0.12px;">12R22.5</div><div class="t" style="left:770.3px;top:412.03px;font-size:10.6px;line-height:10.6px;color:#2a2a2a;font-weight:400;letter-spacing:-0.12px;">TDY3</div><div class="t" style="left:845px;top:412.03px;font-size:10.6px;line-height:10.6px;color:#2a2a2a;font-weight:400;letter-spacing:-0.12px;">-</div><div class="t" style="left:919.2px;top:412.03px;font-size:10.6px;line-height:10.6px;color:#2a2a2a;font-weight:400;letter-spacing:-0.12px;">01-05-2024</div><div class="t" style="left:1009.5px;top:412.03px;font-size:10.6px;line-height:10.6px;color:#2a2a2a;font-weight:400;letter-spacing:-0.12px;">-</div><div class="t" style="left:1092.4px;top:412.03px;font-size:10.6px;line-height:10.6px;color:#2a2a2a;font-weight:400;letter-spacing:-0.12px;">-</div><div class="t" style="left:1174.1px;top:412.03px;font-size:10.6px;line-height:10.6px;color:#2a2a2a;font-weight:400;letter-spacing:-0.12px;">5.00</div><div class="t" style="left:1256.5px;top:412.03px;font-size:10.6px;line-height:10.6px;color:#2a2a2a;font-weight:400;letter-spacing:-0.12px;">S/. 483.24</div><div class="a" style="left:242px;top:468px;width:1100px;height:1px;background:#e0e0e0"></div><svg class="a" style="left:252px;top:434px" width="38" height="35" viewBox="0 0 38 35"><defs><filter id="sh7" x="-50%" y="-50%" width="200%" height="200%"><feGaussianBlur stdDeviation="1"/></filter></defs><circle cx="10" cy="10.5" r="8.2" fill="rgba(0,0,0,.18)" filter="url(#sh7)"/><circle cx="26.6" cy="10.5" r="8.2" fill="rgba(0,0,0,.18)" filter="url(#sh7)"/><circle cx="10" cy="27" r="8.2" fill="rgba(0,0,0,.18)" filter="url(#sh7)"/><circle cx="26.6" cy="27" r="8.2" fill="rgba(0,0,0,.18)" filter="url(#sh7)"/><circle cx="10" cy="9.5" r="8.2" fill="#63acf4"/><circle cx="26.6" cy="9.5" r="8.2" fill="#4bae50"/><circle cx="10" cy="26" r="8.2" fill="#8b8d8a"/><circle cx="26.6" cy="26" r="8.2" fill="#f44336"/><path d="M6.4 12.9 L11.6 7.3" stroke="#fff" stroke-width="2.3"/><path d="M12.3 6.5 L13.2 5.6" stroke="#fff" stroke-width="2.3"/><polygon points="26.60,4.90 28.02,6.08 29.85,6.25 30.02,8.08 31.20,9.50 30.02,10.92 29.85,12.75 28.02,12.92 26.60,14.10 25.18,12.92 23.35,12.75 23.18,10.92 22.00,9.50 23.18,8.08 23.35,6.25 25.18,6.08" fill="#fff"/><circle cx="26.6" cy="9.5" r="1.8" fill="#4bae50"/><polygon points="10.00,21.40 11.42,22.58 13.25,22.75 13.42,24.58 14.60,26.00 13.42,27.42 13.25,29.25 11.42,29.42 10.00,30.60 8.58,29.42 6.75,29.25 6.58,27.42 5.40,26.00 6.58,24.58 6.75,22.75 8.58,22.58" fill="#fff"/><circle cx="10" cy="26" r="1.8" fill="#8b8d8a"/><path d="M25.2 21.2 H27.6 V23.6 H29.5 L26.4 26.7 L23.3 23.6 H25.2 Z" fill="#fff"/><rect x="23.1" y="27.7" width="6.5" height="1.5" fill="#fff"/></svg><div class="t" style="left:318px;top:446.03px;font-size:10.6px;line-height:10.6px;color:#2a2a2a;font-weight:400;letter-spacing:-0.12px;">7037</div><div class="t" style="left:365.2px;top:446.03px;font-size:10.6px;line-height:10.6px;color:#2a2a2a;font-weight:400;letter-spacing:-0.12px;">desinstalado</div><div class="t" style="left:462px;top:446.03px;font-size:10.6px;line-height:10.6px;color:#2a2a2a;font-weight:400;letter-spacing:-0.12px;">1833418*</div><div class="t" style="left:537.3px;top:446.03px;font-size:10.6px;line-height:10.6px;color:#2a2a2a;font-weight:400;letter-spacing:-0.12px;">YOKOHAMA</div><div class="t" style="left:619.5px;top:446.03px;font-size:10.6px;line-height:10.6px;color:#2a2a2a;font-weight:400;letter-spacing:-0.12px;">MY507</div><div class="t" style="left:694px;top:446.03px;font-size:10.6px;line-height:10.6px;color:#2a2a2a;font-weight:400;letter-spacing:-0.12px;">12R22.5</div><div class="t" style="left:770.3px;top:446.03px;font-size:10.6px;line-height:10.6px;color:#2a2a2a;font-weight:400;letter-spacing:-0.12px;">TDY3</div><div class="t" style="left:845px;top:446.03px;font-size:10.6px;line-height:10.6px;color:#2a2a2a;font-weight:400;letter-spacing:-0.12px;">-</div><div class="t" style="left:919.2px;top:446.03px;font-size:10.6px;line-height:10.6px;color:#2a2a2a;font-weight:400;letter-spacing:-0.12px;">01-05-2024</div><div class="t" style="left:1009.5px;top:446.03px;font-size:10.6px;line-height:10.6px;color:#2a2a2a;font-weight:400;letter-spacing:-0.12px;">-</div><div class="t" style="left:1092.4px;top:446.03px;font-size:10.6px;line-height:10.6px;color:#2a2a2a;font-weight:400;letter-spacing:-0.12px;">-</div><div class="t" style="left:1174.1px;top:446.03px;font-size:10.6px;line-height:10.6px;color:#2a2a2a;font-weight:400;letter-spacing:-0.12px;">5.00</div><div class="t" style="left:1256.5px;top:446.03px;font-size:10.6px;line-height:10.6px;color:#2a2a2a;font-weight:400;letter-spacing:-0.12px;">S/. 483.24</div><div class="a" style="left:242px;top:502px;width:1100px;height:1px;background:#e0e0e0"></div><svg class="a" style="left:252px;top:468px" width="38" height="35" viewBox="0 0 38 35"><defs><filter id="sh8" x="-50%" y="-50%" width="200%" height="200%"><feGaussianBlur stdDeviation="1"/></filter></defs><circle cx="10" cy="10.5" r="8.2" fill="rgba(0,0,0,.18)" filter="url(#sh8)"/><circle cx="26.6" cy="10.5" r="8.2" fill="rgba(0,0,0,.18)" filter="url(#sh8)"/><circle cx="10" cy="27" r="8.2" fill="rgba(0,0,0,.18)" filter="url(#sh8)"/><circle cx="26.6" cy="27" r="8.2" fill="rgba(0,0,0,.18)" filter="url(#sh8)"/><circle cx="10" cy="9.5" r="8.2" fill="#63acf4"/><circle cx="26.6" cy="9.5" r="8.2" fill="#4bae50"/><circle cx="10" cy="26" r="8.2" fill="#8b8d8a"/><circle cx="26.6" cy="26" r="8.2" fill="#f44336"/><path d="M6.4 12.9 L11.6 7.3" stroke="#fff" stroke-width="2.3"/><path d="M12.3 6.5 L13.2 5.6" stroke="#fff" stroke-width="2.3"/><polygon points="26.60,4.90 28.02,6.08 29.85,6.25 30.02,8.08 31.20,9.50 30.02,10.92 29.85,12.75 28.02,12.92 26.60,14.10 25.18,12.92 23.35,12.75 23.18,10.92 22.00,9.50 23.18,8.08 23.35,6.25 25.18,6.08" fill="#fff"/><circle cx="26.6" cy="9.5" r="1.8" fill="#4bae50"/><polygon points="10.00,21.40 11.42,22.58 13.25,22.75 13.42,24.58 14.60,26.00 13.42,27.42 13.25,29.25 11.42,29.42 10.00,30.60 8.58,29.42 6.75,29.25 6.58,27.42 5.40,26.00 6.58,24.58 6.75,22.75 8.58,22.58" fill="#fff"/><circle cx="10" cy="26" r="1.8" fill="#8b8d8a"/><path d="M25.2 21.2 H27.6 V23.6 H29.5 L26.4 26.7 L23.3 23.6 H25.2 Z" fill="#fff"/><rect x="23.1" y="27.7" width="6.5" height="1.5" fill="#fff"/></svg><div class="t" style="left:318px;top:480.03px;font-size:10.6px;line-height:10.6px;color:#2a2a2a;font-weight:400;letter-spacing:-0.12px;">6992</div><div class="t" style="left:365.2px;top:480.03px;font-size:10.6px;line-height:10.6px;color:#2a2a2a;font-weight:400;letter-spacing:-0.12px;">desinstalado</div><div class="t" style="left:462px;top:480.03px;font-size:10.6px;line-height:10.6px;color:#2a2a2a;font-weight:400;letter-spacing:-0.12px;">2R1162</div><div class="t" style="left:537.3px;top:480.03px;font-size:10.6px;line-height:10.6px;color:#2a2a2a;font-weight:400;letter-spacing:-0.12px;">KUMHO</div><div class="t" style="left:619.5px;top:480.03px;font-size:10.6px;line-height:10.6px;color:#2a2a2a;font-weight:400;letter-spacing:-0.12px;">KFD18</div><div class="t" style="left:694px;top:480.03px;font-size:10.6px;line-height:10.6px;color:#2a2a2a;font-weight:400;letter-spacing:-0.12px;">12R22.5</div><div class="t" style="left:770.3px;top:480.03px;font-size:10.6px;line-height:10.6px;color:#2a2a2a;font-weight:400;letter-spacing:-0.12px;">TDY3</div><div class="t" style="left:845px;top:480.03px;font-size:10.6px;line-height:10.6px;color:#2a2a2a;font-weight:400;letter-spacing:-0.12px;">-</div><div class="t" style="left:919.2px;top:480.03px;font-size:10.6px;line-height:10.6px;color:#2a2a2a;font-weight:400;letter-spacing:-0.12px;">01-04-2024</div><div class="t" style="left:1009.5px;top:480.03px;font-size:10.6px;line-height:10.6px;color:#2a2a2a;font-weight:400;letter-spacing:-0.12px;">-</div><div class="t" style="left:1092.4px;top:480.03px;font-size:10.6px;line-height:10.6px;color:#2a2a2a;font-weight:400;letter-spacing:-0.12px;">-</div><div class="t" style="left:1174.1px;top:480.03px;font-size:10.6px;line-height:10.6px;color:#2a2a2a;font-weight:400;letter-spacing:-0.12px;">5.00</div><div class="t" style="left:1256.5px;top:480.03px;font-size:10.6px;line-height:10.6px;color:#2a2a2a;font-weight:400;letter-spacing:-0.12px;">S/. 483.24</div><div class="a" style="left:242px;top:536px;width:1100px;height:1px;background:#e0e0e0"></div><svg class="a" style="left:252px;top:502px" width="38" height="35" viewBox="0 0 38 35"><defs><filter id="sh9" x="-50%" y="-50%" width="200%" height="200%"><feGaussianBlur stdDeviation="1"/></filter></defs><circle cx="10" cy="10.5" r="8.2" fill="rgba(0,0,0,.18)" filter="url(#sh9)"/><circle cx="26.6" cy="10.5" r="8.2" fill="rgba(0,0,0,.18)" filter="url(#sh9)"/><circle cx="10" cy="27" r="8.2" fill="rgba(0,0,0,.18)" filter="url(#sh9)"/><circle cx="26.6" cy="27" r="8.2" fill="rgba(0,0,0,.18)" filter="url(#sh9)"/><circle cx="10" cy="9.5" r="8.2" fill="#63acf4"/><circle cx="26.6" cy="9.5" r="8.2" fill="#4bae50"/><circle cx="10" cy="26" r="8.2" fill="#8b8d8a"/><circle cx="26.6" cy="26" r="8.2" fill="#f44336"/><path d="M6.4 12.9 L11.6 7.3" stroke="#fff" stroke-width="2.3"/><path d="M12.3 6.5 L13.2 5.6" stroke="#fff" stroke-width="2.3"/><polygon points="26.60,4.90 28.02,6.08 29.85,6.25 30.02,8.08 31.20,9.50 30.02,10.92 29.85,12.75 28.02,12.92 26.60,14.10 25.18,12.92 23.35,12.75 23.18,10.92 22.00,9.50 23.18,8.08 23.35,6.25 25.18,6.08" fill="#fff"/><circle cx="26.6" cy="9.5" r="1.8" fill="#4bae50"/><polygon points="10.00,21.40 11.42,22.58 13.25,22.75 13.42,24.58 14.60,26.00 13.42,27.42 13.25,29.25 11.42,29.42 10.00,30.60 8.58,29.42 6.75,29.25 6.58,27.42 5.40,26.00 6.58,24.58 6.75,22.75 8.58,22.58" fill="#fff"/><circle cx="10" cy="26" r="1.8" fill="#8b8d8a"/><path d="M25.2 21.2 H27.6 V23.6 H29.5 L26.4 26.7 L23.3 23.6 H25.2 Z" fill="#fff"/><rect x="23.1" y="27.7" width="6.5" height="1.5" fill="#fff"/></svg><div class="t" style="left:318px;top:514.03px;font-size:10.6px;line-height:10.6px;color:#2a2a2a;font-weight:400;letter-spacing:-0.12px;">6991</div><div class="t" style="left:365.2px;top:514.03px;font-size:10.6px;line-height:10.6px;color:#2a2a2a;font-weight:400;letter-spacing:-0.12px;">desinstalado</div><div class="t" style="left:462px;top:514.03px;font-size:10.6px;line-height:10.6px;color:#2a2a2a;font-weight:400;letter-spacing:-0.12px;">1R1162</div><div class="t" style="left:537.3px;top:514.03px;font-size:10.6px;line-height:10.6px;color:#2a2a2a;font-weight:400;letter-spacing:-0.12px;">GITI</div><div class="t" style="left:619.5px;top:514.03px;font-size:10.6px;line-height:10.6px;color:#2a2a2a;font-weight:400;letter-spacing:-0.12px;">GDL657</div><div class="t" style="left:694px;top:514.03px;font-size:10.6px;line-height:10.6px;color:#2a2a2a;font-weight:400;letter-spacing:-0.12px;">12R22.5</div><div class="t" style="left:770.3px;top:514.03px;font-size:10.6px;line-height:10.6px;color:#2a2a2a;font-weight:400;letter-spacing:-0.12px;">TDY3</div><div class="t" style="left:845px;top:514.03px;font-size:10.6px;line-height:10.6px;color:#2a2a2a;font-weight:400;letter-spacing:-0.12px;">-</div><div class="t" style="left:919.2px;top:514.03px;font-size:10.6px;line-height:10.6px;color:#2a2a2a;font-weight:400;letter-spacing:-0.12px;">01-04-2024</div><div class="t" style="left:1009.5px;top:514.03px;font-size:10.6px;line-height:10.6px;color:#2a2a2a;font-weight:400;letter-spacing:-0.12px;">-</div><div class="t" style="left:1092.4px;top:514.03px;font-size:10.6px;line-height:10.6px;color:#2a2a2a;font-weight:400;letter-spacing:-0.12px;">-</div><div class="t" style="left:1174.1px;top:514.03px;font-size:10.6px;line-height:10.6px;color:#2a2a2a;font-weight:400;letter-spacing:-0.12px;">5.00</div><div class="t" style="left:1256.5px;top:514.03px;font-size:10.6px;line-height:10.6px;color:#2a2a2a;font-weight:400;letter-spacing:-0.12px;">S/. 483.24</div><div class="a" style="left:242px;top:536px;width:1100px;height:18px;background:#f4f4f4;border-bottom:1px solid #e0e0e0"></div><div class="a" style="left:242px;top:536px;width:951px;height:16.5px;background:#c4c0c0;border-radius:0 2px 2px 0"></div></div><div class="a" style="left:241px;top:108px;width:1px;height:490px;background:#e4e4e4"></div><div class="a" style="left:1342px;top:108px;width:1px;height:490px;background:#e4e4e4"></div><div class="t" style="left:1047.7px;top:571.88px;font-size:9.0px;line-height:9.0px;color:#555;font-weight:400;letter-spacing:-0.2px;">Rows per page:</div><div class="t" style="left:1134.5px;top:571.46px;font-size:9.5px;line-height:9.5px;color:#444;font-weight:400;letter-spacing:0px;">10</div><svg class="a" style="left:1154px;top:572px" width="10" height="8"><path d="M1.5 2.5 L8.5 2.5 L5 6 Z" fill="#555"/></svg><div class="a" style="left:1134px;top:588px;width:34px;height:1px;background:#8a8a8a"></div><div class="t" style="left:1197px;top:571.63px;font-size:9.3px;line-height:9.3px;color:#444;font-weight:400;letter-spacing:-0.2px;">1-10 of 1268</div><svg class="a" style="left:1279px;top:569px" width="12" height="14"><path d="M8 2 L3.5 7 L8 12" fill="none" stroke="#bdbdbd" stroke-width="1.3"/></svg><svg class="a" style="left:1316px;top:569px" width="12" height="14"><path d="M4 2 L8.5 7 L4 12" fill="none" stroke="#555" stroke-width="1.3"/></svg>
<div class="a" style="left:251px;top:616px;width:348px;height:30px;background:#cde9f5"></div><div class="t" style="left:263px;top:623.84px;font-size:12px;line-height:12px;color:#6b7f88;font-weight:400;letter-spacing:-0.2px;">Exportar</div><svg class="a" style="left:577px;top:626px" width="12" height="8"><path d="M2.5 2.5 L9.5 2.5 L6 6 Z" fill="#555"/></svg></body></html>
